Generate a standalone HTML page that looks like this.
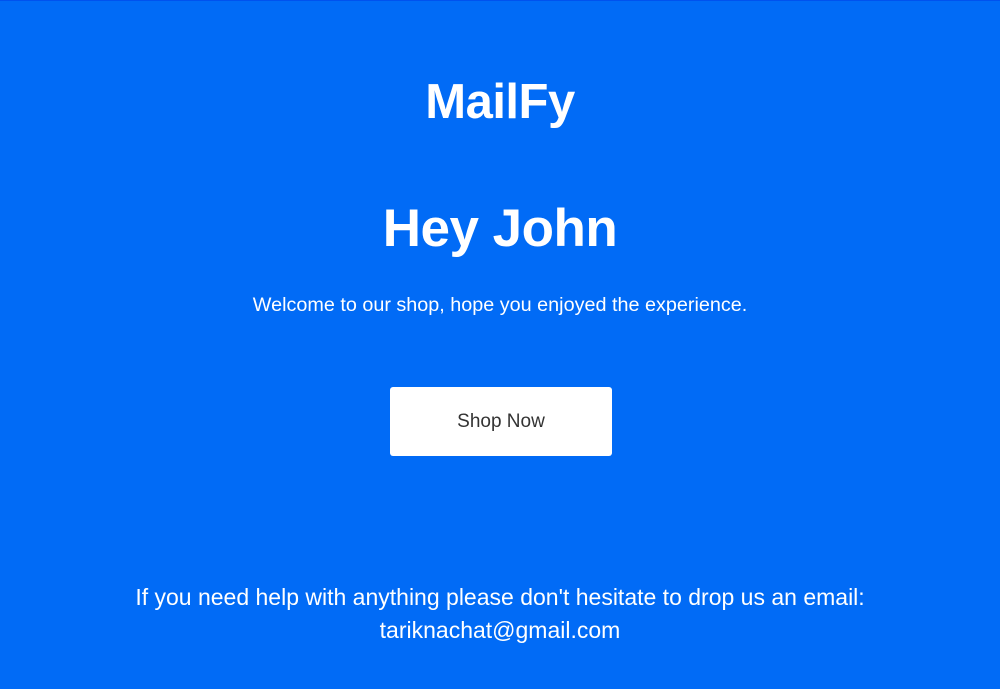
<!DOCTYPE html>
<html><head><meta charset="utf-8"><style>
html,body{margin:0;padding:0}
body{width:1000px;height:689px;background:#016bf6;border-top:1px solid #0052ee;box-sizing:border-box;font-family:"Liberation Sans",sans-serif;color:#fff;position:relative;overflow:hidden}
.t{position:absolute;left:0;width:1000px;text-align:center;white-space:nowrap}
.logo{top:73px;font-size:49px;font-weight:bold;letter-spacing:-0.5px}
.h{top:197px;font-size:53px;font-weight:bold;letter-spacing:-0.5px}
.w{top:293px;font-size:19.8px}
.btn{position:absolute;left:390px;top:386px;width:222px;height:69px;background:#fff;border-radius:3px;color:#333;font-size:19px;text-align:center;line-height:69px}
.f{top:580px;font-size:23px;line-height:33px}
</style></head><body>
<div class="t logo">MailFy</div>
<div class="t h">Hey John</div>
<div class="t w">Welcome to our shop, hope you enjoyed the experience.</div>
<div class="btn">Shop Now</div>
<div class="t f">If you need help with anything please don't hesitate to drop us an email:<br>tariknachat@gmail.com</div>
</body></html>
